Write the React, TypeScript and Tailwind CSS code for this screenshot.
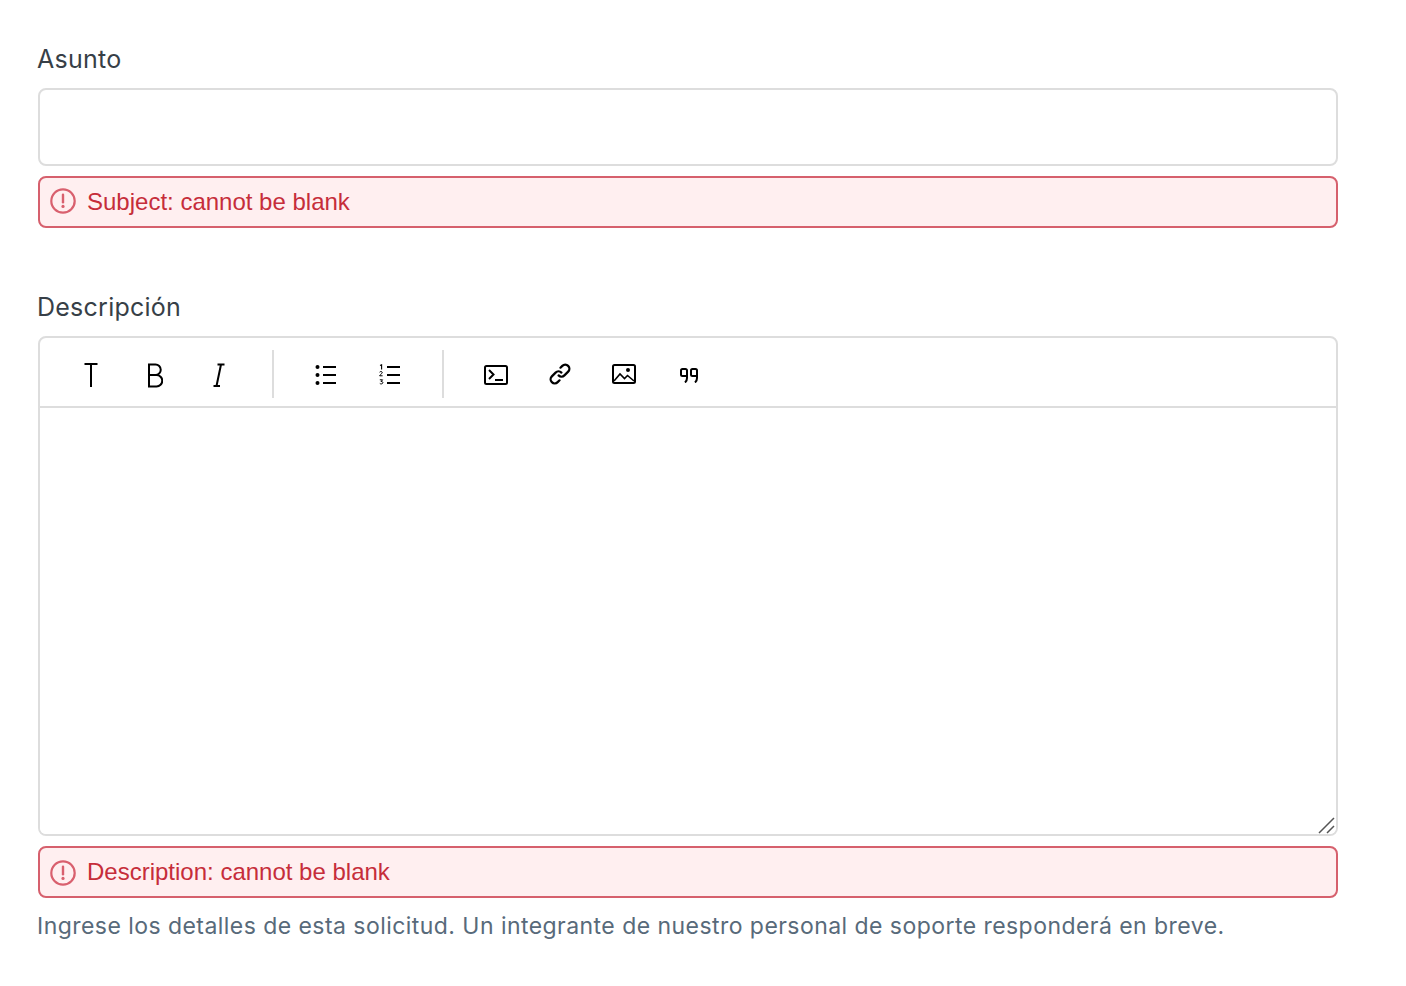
const Alert = ({ text, low }: { text: string; low?: boolean }) => (
  <div className="mt-[10px] flex h-[52px] items-center rounded-[8px] border-2 border-[#d6606d] bg-[#ffeff0] pl-[10px] font-['Liberation_Sans',sans-serif] text-[24px] text-[#c62d3a]">
    <svg width="26" height="26" viewBox="0 0 26 26" fill="none" className={low ? "shrink-0 translate-y-px" : "shrink-0 -translate-y-px"}>
      <circle cx="13" cy="13" r="11.7" stroke="#d9606e" strokeWidth="2.2" />
      <path d="M13 6.8v7.4" stroke="#d9606e" strokeWidth="2.4" strokeLinecap="round" />
      <circle cx="13" cy="18.4" r="1.6" fill="#d9606e" />
    </svg>
    <span className="ml-[11px]">{text}</span>
  </div>
);

const Btn = ({ children }: { children: React.ReactNode }) => (
  <span className="flex h-[28px] w-[64px] shrink-0 items-center justify-center text-black">{children}</span>
);

const Divider = () => <span className="block h-[48px] w-[2px] shrink-0 bg-[#dddddd]" />;

export default function App() {
  return (
    <div className="min-h-[986px] bg-white pl-[38px] pr-[68px] pt-[44px] font-['Inter','Liberation_Sans',sans-serif]">
      <label className="mb-[14px] -ml-px block text-[25px] leading-[30px] tracking-[0.25px] text-[#373f47]">Asunto</label>
      <input type="text" className="block h-[78px] w-full rounded-[8px] border-2 border-[#dddddd] bg-white outline-none" />
      <Alert text="Subject: cannot be blank" />

      <label className="mb-[14px] -ml-px mt-[64px] block text-[25px] leading-[30px] tracking-[0.25px] text-[#373f47]">Descripción</label>
      <div className="rounded-[8px] border-2 border-[#dddddd]">
        <div className="flex h-[70px] items-center border-b-2 border-[#dddddd] pl-[19px] pt-[6px]">
          <Btn>
            <svg width="16" height="26" viewBox="0 0 16 26" fill="none" stroke="currentColor" strokeWidth="2">
              <path d="M1.5 2h13M8 2v23" />
            </svg>
          </Btn>
          <Btn>
            <svg width="16" height="26" viewBox="0 0 16 26" fill="none" stroke="currentColor" strokeWidth="2">
              <path d="M2 2.500h6.500a5 5 0 0 1 0 10.500H2zM2 13h7.500a5.750 5.750 0 0 1 0 11.500H2z" />
            </svg>
          </Btn>
          <Btn>
            <svg width="12" height="26" viewBox="0 0 12 26" fill="none" stroke="currentColor" strokeWidth="2">
              <path d="M4.500 2.500h7M0.500 24h6.500M8 2.500l-4.500 21.500" />
            </svg>
          </Btn>
          <span className="ml-[21px] -translate-y-[1px]"><Divider /></span>
          <span className="ml-[20px]" />
          <Btn>
            <svg width="22" height="22" viewBox="0 0 22 22" fill="none" stroke="currentColor" strokeWidth="2">
              <circle cx="2.500" cy="3" r="2" fill="currentColor" stroke="none" />
              <circle cx="2.500" cy="11" r="2" fill="currentColor" stroke="none" />
              <circle cx="2.500" cy="19" r="2" fill="currentColor" stroke="none" />
              <path d="M8 3h13M8 11h13M8 19h13" />
            </svg>
          </Btn>
          <Btn>
            <svg width="22" height="22" viewBox="0 0 22 22" fill="none" stroke="currentColor">
              <path d="M1 1.500 2.600 0.800V5.500" strokeWidth="1.100" />
              <path d="M0.600 8.200c1-1.200 3-.7 2.600.6-.2.8-2 1.800-2.600 3h3" strokeWidth="1" />
              <path d="M0.800 15.800h2.800l-1.600 1.700c1.500-.1 2 .6 1.800 1.400-.3 1.200-2.200 1.300-3 .5" strokeWidth="1" />
              <path d="M8 3h13M8 11h13M8 19h13" strokeWidth="2" />
            </svg>
          </Btn>
          <span className="ml-[20px] -translate-y-[1px]"><Divider /></span>
          <span className="ml-[20px]" />
          <Btn>
            <svg width="24" height="20" viewBox="0 0 24 20" fill="none" stroke="currentColor" strokeWidth="2">
              <rect x="1" y="1" width="22" height="18" rx="1.500" />
              <path d="M5 5l4.500 4.500L5 14M11 15h8" />
            </svg>
          </Btn>
          <Btn>
            <svg width="24" height="24" viewBox="0 0 16 16" fill="currentColor" className="-translate-y-px">
              <path d="m7.775 3.275 1.25-1.25a3.5 3.5 0 1 1 4.95 4.95l-2.5 2.5a3.5 3.5 0 0 1-4.95 0 .751.751 0 0 1 .018-1.042.751.751 0 0 1 1.042-.018 1.998 1.998 0 0 0 2.83 0l2.5-2.5a2.002 2.002 0 0 0-2.83-2.83l-1.25 1.25a.751.751 0 0 1-1.042-.018.751.751 0 0 1-.018-1.042Zm-4.69 9.64a1.998 1.998 0 0 0 2.83 0l1.25-1.25a.751.751 0 0 1 1.042.018.751.751 0 0 1 .018 1.042l-1.25 1.25a3.5 3.5 0 1 1-4.95-4.95l2.5-2.5a3.5 3.5 0 0 1 4.95 0 .751.751 0 0 1-.018 1.042.751.751 0 0 1-1.042.018 1.998 1.998 0 0 0-2.83 0l-2.5 2.5a1.998 1.998 0 0 0 0 2.83Z" />
            </svg>
          </Btn>
          <Btn>
            <svg width="24" height="20" viewBox="0 0 24 20" fill="none" stroke="currentColor" strokeWidth="2" className="-translate-y-px">
              <rect x="1" y="1" width="22" height="18" rx="1.500" />
              <path d="M2 17l6-7 4.500 4.500 3-3L22 17" strokeWidth="1.600" />
              <circle cx="16" cy="6" r="2" fill="currentColor" stroke="none" />
            </svg>
          </Btn>
          <Btn>
            <svg width="18" height="15" viewBox="0 0 18 15" fill="none" stroke="currentColor" strokeWidth="2" className="translate-x-px">
              <path d="M7 8H2.500A1.500 1.500 0 0 1 1 6.500v-4A1.500 1.500 0 0 1 2.500 1h3A1.500 1.500 0 0 1 7 2.500V10c0 2-.6 3.300-2 4.500" />
              <path d="M17 8h-4.500A1.500 1.500 0 0 1 11 6.500v-4A1.500 1.500 0 0 1 12.500 1h3A1.500 1.500 0 0 1 17 2.500V10c0 2-.6 3.300-2 4.500" />
            </svg>
          </Btn>
        </div>
        <div className="relative">
          <textarea className="block h-[426px] w-full resize-none rounded-b-[6px] bg-white outline-none" />
          <svg width="18" height="18" viewBox="0 0 18 18" fill="none" stroke="#555555" strokeWidth="1.500" className="pointer-events-none absolute bottom-0 right-0">
            <path d="M1 17 16 2M9 17l7-7" />
          </svg>
        </div>
      </div>
      <Alert text="Description: cannot be blank" low />
      <p className="mt-[13px] -ml-px text-[23px] leading-[30px] tracking-[0.45px] text-[#586a7a]">
        Ingrese los detalles de esta solicitud. Un integrante de nuestro personal de soporte responderá en breve.
      </p>
    </div>
  );
}
